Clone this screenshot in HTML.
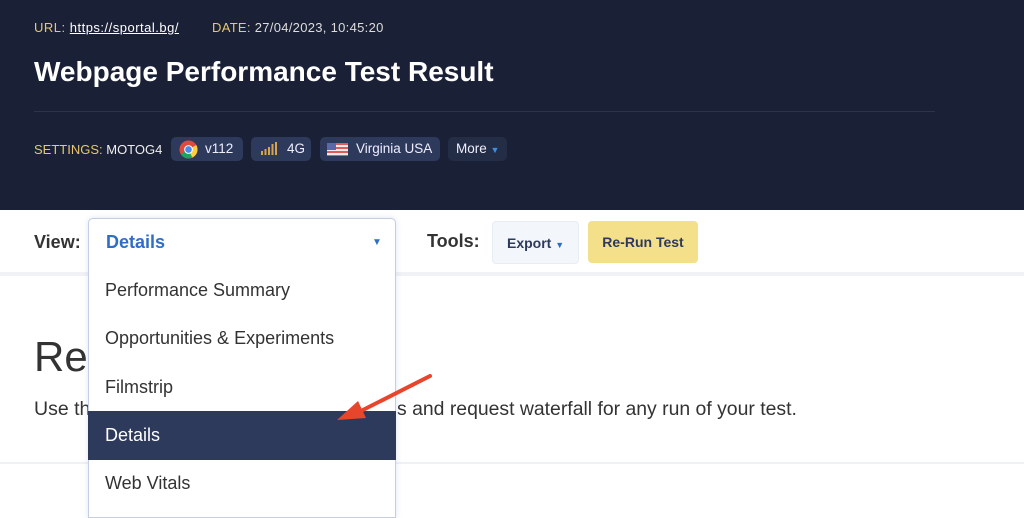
<!DOCTYPE html>
<html><head><meta charset="utf-8"><style>
*{margin:0;padding:0;box-sizing:border-box}
body{width:1024px;height:511px;overflow:hidden;background:#fff;font-family:"Liberation Sans",sans-serif;position:relative}
.hdr{position:absolute;left:0;top:0;width:1024px;height:210px;background:#1a2035}
.a{position:absolute;white-space:nowrap}
.y{color:#e6c86e}
.pill{position:absolute;top:137px;height:24px;border-radius:5px;background:#2e3a5c;color:#eef;font-size:13.5px;line-height:24px;padding:0 8px;white-space:nowrap}
.item{position:absolute;left:105px;font-size:18px;color:#333}
</style></head><body>
<div class="hdr">
<div class="a" style="left:34px;top:20px;font-size:13px;color:#ddd;letter-spacing:.5px"><span class="y">URL:</span> <u style="color:#fff">https://sportal.bg/</u></div>
<div class="a" style="left:212px;top:20px;font-size:13px;color:#ddd;letter-spacing:.3px"><span class="y">DATE:</span> 27/04/2023, 10:45:20</div>
<div class="a" style="left:34px;top:56px;font-size:28px;font-weight:bold;color:#fff;letter-spacing:0">Webpage Performance Test Result</div>
<div class="a" style="left:34px;top:111px;width:901px;height:1px;background:#2c3449"></div>
<div class="a" style="left:34px;top:142px;font-size:13px;color:#eee"><span class="y">SETTINGS:</span> MOTOG4</div>
<div class="pill" style="left:171px;width:72px;padding-left:34px">v112
<svg style="position:absolute;left:8px;top:3px" width="19" height="19" viewBox="0 0 20 20"><circle cx="10" cy="10" r="9.5" fill="#dd4b3e"/><path d="M10 10 L1.8 14.8 A9.5 9.5 0 0 0 14 18.6Z" fill="#1da463"/><path d="M10 10 L14 18.6 A9.5 9.5 0 0 0 18.2 5.2Z" fill="#ffcd40"/><circle cx="10" cy="10" r="4.6" fill="#fff"/><circle cx="10" cy="10" r="3.5" fill="#4a8af4"/></svg></div>
<div class="pill" style="left:251px;width:60px;padding-left:36px">4G
<svg style="position:absolute;left:10px;top:5px" width="16" height="13"><rect x="0" y="9" width="2" height="4" fill="#d9a34a"/><rect x="3.5" y="7" width="2" height="6" fill="#d9a34a"/><rect x="7" y="5" width="2" height="8" fill="#d9a34a"/><rect x="10.5" y="2" width="2" height="11" fill="#d9a34a"/><rect x="14" y="0" width="2" height="13" fill="#d9a34a"/></svg></div>
<div class="pill" style="left:320px;width:120px;padding-left:36px">Virginia USA
<svg style="position:absolute;left:7px;top:6px" width="21" height="13"><rect width="21" height="13" fill="#f0eaea"/><rect y="0" width="21" height="2" fill="#e05a5a"/><rect y="4" width="21" height="2" fill="#e05a5a"/><rect y="8" width="21" height="2" fill="#e05a5a"/><rect y="12" width="21" height="1" fill="#e05a5a"/><rect width="9" height="7" fill="#5a6aa8"/></svg></div>
<div class="pill" style="left:448px;width:59px;background:#232d45">More <span style="color:#3e8ee0;font-size:9px">▼</span></div>
</div>
<div class="a" style="left:0;top:272px;width:1024px;height:4px;background:#f1f2f5"></div>
<div class="a" style="left:34px;top:232px;font-size:18px;font-weight:bold;color:#333">View:</div>
<div class="a" style="left:427px;top:231px;font-size:18px;font-weight:bold;color:#333">Tools:</div>
<div class="a" style="left:492px;top:221px;width:87px;height:43px;background:#f3f6fb;border:1px solid #e8ecf3;border-radius:4px;font-size:14px;font-weight:bold;color:#2e3a5c;line-height:42px;padding-left:14px">Export <span style="color:#2e6fc5;font-size:9px">▼</span></div>
<div class="a" style="left:588px;top:221px;width:110px;height:42px;background:#f4df8a;border-radius:4px;font-size:14px;font-weight:bold;color:#2e3a5c;line-height:42px;text-align:center">Re-Run Test</div>
<div class="a" style="left:34px;top:333px;font-size:42px;color:#333;font-weight:300">Rec</div>
<div class="a" style="left:34px;top:398px;font-size:19.5px;color:#333">Use th</div>
<div class="a" style="left:397px;top:398px;font-size:19.4px;color:#333">s and request waterfall for any run of your test.</div>
<div class="a" style="left:0;top:462px;width:1024px;height:2px;background:#f0f1f3"></div>
<div class="a" style="left:88px;top:218px;width:308px;height:300px;background:#fff;border:1px solid #c5cde0;border-radius:5px 5px 0 0;box-shadow:0 0 6px rgba(120,150,220,.25)"></div>
<div class="a" style="left:106px;top:232px;font-size:18px;font-weight:bold;color:#2e6fc5">Details</div>
<div class="a" style="left:372px;top:237px;font-size:10px;color:#2e6fc5">▼</div>
<div class="item" style="top:280px">Performance Summary</div>
<div class="item" style="top:328px">Opportunities &amp; Experiments</div>
<div class="item" style="top:377px">Filmstrip</div>
<div class="a" style="left:88px;top:411px;width:308px;height:49px;background:#2e3a5c"></div>
<div class="item" style="top:425px;color:#fff">Details</div>
<div class="item" style="top:473px">Web Vitals</div>
<svg class="a" style="left:330px;top:370px" width="110" height="60"><line x1="100" y1="6" x2="25" y2="44" stroke="#e8452d" stroke-width="4" stroke-linecap="round"/><path d="M7 50 L28 31 L36 48Z" fill="#e8452d"/></svg>
</body></html>
